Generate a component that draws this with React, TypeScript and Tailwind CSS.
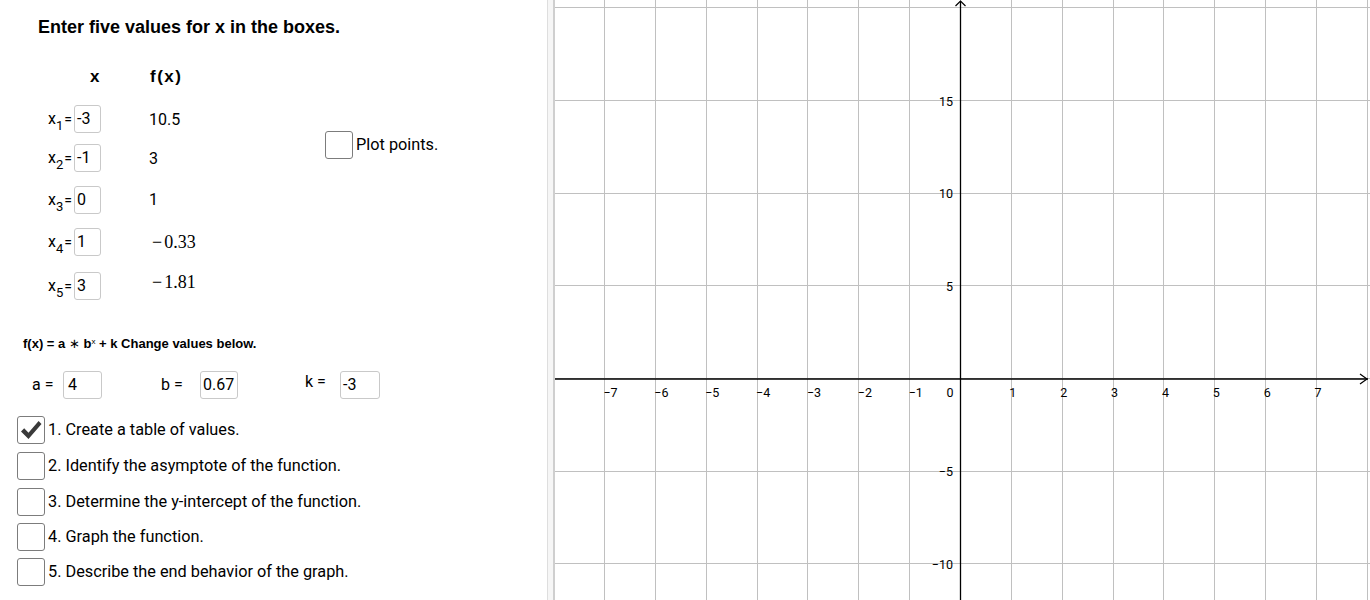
import React from "react";

const ROBOTO = { fontFamily: "Roboto, 'Liberation Sans', sans-serif" };

function InputBox({ value, w, className = "" }: { value: string; w: string; className?: string }) {
  return (
    <div
      className={`${w} h-[28px] border border-[#c9c9c9] rounded-[3px] bg-white flex items-center pl-[2px] text-[16px] text-black ${className}`}
    >
      {value}
    </div>
  );
}

function CheckBox({ checked }: { checked?: boolean }) {
  return (
    <div className="w-[28px] h-[28px] border border-[#7c7c7c] rounded-[3px] bg-white flex items-center justify-center shrink-0">
      {checked && (
        <svg width="22" height="21" viewBox="0 0 22 21">
          <path d="M1 11.5 L4.2 8.3 L8.5 12.8 L18.6 1 L21.5 4 L8.5 19 Z" fill="#3a3a3a" />
        </svg>
      )}
    </div>
  );
}

const rows = [
  { sub: "1", x: "-3", fx: "10.5", serif: false, mt: "mt-[17px]", vm: "mt-[2px]" },
  { sub: "2", x: "-1", fx: "3", serif: false, mt: "mt-[11px]", vm: "mt-[2px]" },
  { sub: "3", x: "0", fx: "1", serif: false, mt: "mt-[14px]", vm: "mt-[0px]" },
  { sub: "4", x: "1", fx: "0.33", serif: true, mt: "mt-[14px]", vm: "mb-[0px]" },
  { sub: "5", x: "3", fx: "1.81", serif: true, mt: "mt-[16px]", vm: "mb-[8px]" },
];

const tasks = [
  { t: "1. Create a table of values.", c: true, mt: "mt-[17px]" },
  { t: "2. Identify the asymptote of the function.", c: false, mt: "mt-[8px]" },
  { t: "3. Determine the y-intercept of the function.", c: false, mt: "mt-[8px]" },
  { t: "4. Graph the function.", c: false, mt: "mt-[7px]" },
  { t: "5. Describe the end behavior of the graph.", c: false, mt: "mt-[7px]" },
];

function Graph() {
  const W = 815;
  const H = 600;
  const ox = 406;
  const oy = 379;
  const ux = 50.86;
  const uy = 18.53;
  const vx: number[] = [];
  for (let k = -7; k <= 8; k++) vx.push(Math.round(ox + k * ux) - 0.5);
  const hy: number[] = [];
  for (let j = -2; j <= 4; j++) hy.push(Math.round(oy - j * 5 * uy) - 0.5);
  const xl: number[] = [-7, -6, -5, -4, -3, -2, -1, 1, 2, 3, 4, 5, 6, 7];
  const yl: number[] = [15, 10, 5, -5, -10];
  return (
    <svg width={W} height={H} viewBox={`0 0 ${W} ${H}`} className="block">
      <rect width={W} height={H} fill="#ffffff" />
      {vx.map((x, i) => (
        <line key={"v" + i} x1={x} y1={0} x2={x} y2={H} stroke="#c0c0c0" strokeWidth={1} />
      ))}
      {hy.map((y, i) => (
        <line key={"h" + i} x1={0} y1={y} x2={W} y2={y} stroke="#c0c0c0" strokeWidth={1} />
      ))}
      <line x1={0} y1={oy} x2={W - 2} y2={oy} stroke="#000" strokeWidth={1.3} />
      <line x1={ox - 0.5} y1={1} x2={ox - 0.5} y2={H} stroke="#000" strokeWidth={1.3} />
      <polyline points={`${W - 10},${oy - 5} ${W - 3},${oy} ${W - 10},${oy + 5}`} fill="none" stroke="#000" strokeWidth={1.2} />
      <polyline points={`${ox - 5.5},${6} ${ox - 0.5},${1} ${ox + 4.5},${6}`} fill="none" stroke="#000" strokeWidth={1.2} />
      <g fontFamily="Roboto, 'Liberation Sans', sans-serif" fontSize={12.5} fill="#000">
        {xl.map((k) => {
          const x = ox + k * ux;
          return k < 0 ? (
            <text key={"xl" + k} x={x - 1.5} y={oy + 18} textAnchor="start">
              {"\u2212" + Math.abs(k)}
            </text>
          ) : (
            <text key={"xl" + k} x={x + 1} y={oy + 18} textAnchor="middle">
              {k}
            </text>
          );
        })}
        <text x={ox - 11} y={oy + 18} textAnchor="middle">
          0
        </text>
        {yl.map((v) => (
          <text key={"yl" + v} x={ox - 8} y={oy - v * uy + 4.5} textAnchor="end">
            {v < 0 ? "\u2212" + Math.abs(v) : v}
          </text>
        ))}
      </g>
    </svg>
  );
}

export default function App() {
  return (
    <div className="w-[1370px] h-[600px] flex bg-white overflow-hidden text-black" style={ROBOTO}>
      {/* left panel */}
      <div className="w-[547px] h-[600px] flex flex-col shrink-0">
        <div
          className="pl-[38px] pt-[16px] text-[18px] leading-[22px] font-bold"
          style={{ fontFamily: "'Liberation Sans', Arial, sans-serif" }}
        >
          Enter five values for x in the boxes.
        </div>
        <div
          className="mt-[28px] flex pl-[90px] text-[17px] leading-[22px] font-bold"
          style={{ fontFamily: "'Liberation Sans', Arial, sans-serif" }}
        >
          <span className="w-[60px]">x</span>
          <span className="tracking-[1.5px]">f(x)</span>
        </div>
        <div className="flex">
          <div className="flex flex-col w-[200px]">
            {rows.map((r) => (
              <div key={r.sub} className={`flex items-center h-[28px] ${r.mt}`}>
                <div className="w-[74px] pl-[48px] flex items-baseline text-[16px] leading-[20px] whitespace-nowrap">
                  <span>x</span>
                  <span className="relative top-[6px] text-[13px] leading-[13px]">{r.sub}</span>
                  <span className="text-[14px] ml-[1px]">=</span>
                </div>
                <InputBox value={r.x} w="w-[27px]" />
                {r.serif ? (
                  <div
                    className={`ml-[51px] text-[18px] leading-[22px] whitespace-nowrap ${r.vm}`}
                    style={{ fontFamily: "'Liberation Serif', 'Times New Roman', serif" }}
                  >
                    <span className="mr-[2px]">{"\u2212"}</span>
                    {r.fx}
                  </div>
                ) : (
                  <div className={`ml-[48px] text-[16px] leading-[20px] ${r.vm}`}>{r.fx}</div>
                )}
              </div>
            ))}
          </div>
          <div className="ml-[125px] pt-[43px] flex items-start">
            <CheckBox />
            <span className="ml-[3px] text-[16.3px] leading-[28px]">Plot points.</span>
          </div>
        </div>
        <div
          className="mt-[36px] pl-[23px] text-[13px] leading-[16px] font-bold whitespace-nowrap"
          style={{ fontFamily: "'Liberation Sans', Arial, sans-serif" }}
        >
          f(x) = a <span className="font-normal">{"\u2217"}</span> b<sup className="text-[8px] font-normal">x</sup> + k Change values below.
        </div>
        <div className="mt-[19px] flex items-center h-[28px] text-[16px]">
          <span className="pl-[32px] w-[63px]">a =</span>
          <InputBox value="4" w="w-[39px]" className="pl-[4px]" />
          <span className="ml-[59px] w-[39px]">b =</span>
          <InputBox value="0.67" w="w-[38px]" />
          <span className="ml-[67px] w-[35px] mb-[6px]">k =</span>
          <InputBox value="-3" w="w-[40px]" />
        </div>
        <div className="flex flex-col pl-[17px]">
          {tasks.map((t) => (
            <div key={t.t} className={`flex items-center h-[28px] ${t.mt}`}>
              <CheckBox checked={t.c} />
              <span className="ml-[3px] text-[16.3px] leading-[20px] whitespace-nowrap">{t.t}</span>
            </div>
          ))}
        </div>
      </div>
      {/* divider */}
      <div className="w-[8px] h-[600px] shrink-0 bg-[#f6f6f6] border-l border-l-[#dedede] border-r-2 border-r-[#cfcfcf]" />
      {/* graph */}
      <div className="flex-1 h-[600px] overflow-hidden">
        <Graph />
      </div>
    </div>
  );
}
